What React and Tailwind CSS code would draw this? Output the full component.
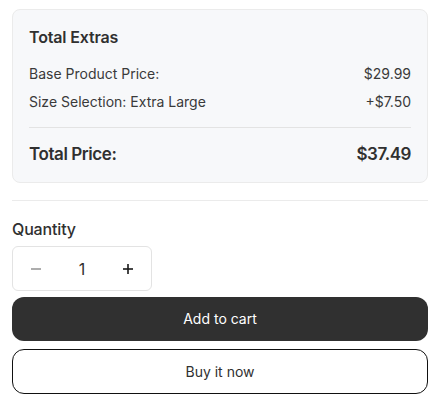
export default function App() {
  return (
    <div className="w-[440px] bg-white px-3 pt-[9px] pb-3 text-[#303030]" style={{ fontFamily: 'Inter, "Noto Sans", sans-serif' }}>
      <div className="rounded-lg border border-[#ebebeb] bg-[#f7f8fa] p-4">
        <h2 className="mb-4 text-base font-semibold leading-[22px] tracking-[-0.01em]">Total Extras</h2>
        <div className="flex flex-col gap-2 text-sm leading-5 text-[#3a3a3a]">
          <div className="flex justify-between">
            <span>Base Product Price:</span>
            <span>$29.99</span>
          </div>
          <div className="flex justify-between">
            <span>Size Selection: Extra Large</span>
            <span>+$7.50</span>
          </div>
        </div>
        <div className="mt-[15px] border-t border-[#e3e3e3] pt-[14px]">
          <div className="flex justify-between text-[17px] font-semibold leading-6 tracking-[-0.025em]">
            <span>Total Price:</span>
            <span>$37.49</span>
          </div>
        </div>
      </div>
      <div className="mt-[17px] border-t border-[#ebebeb] pt-4">
        <div className="text-base font-medium leading-6 tracking-[-0.01em]">Quantity</div>
        <div className="mt-[5px] grid h-[45px] w-[140px] grid-cols-3 items-center rounded-md border border-[#e3e3e3] bg-white">
          <button className="flex items-center justify-center text-[#8a8a8a]">
            <svg width="10" height="2" viewBox="0 0 10 2"><rect width="10" height="1.4" x="0" y="0.3" fill="currentColor" /></svg>
          </button>
          <div className="text-center text-base leading-6">1</div>
          <button className="flex items-center justify-center text-[#1a1a1a]">
            <svg width="10" height="10" viewBox="0 0 10 10"><rect width="10" height="1.6" x="0" y="4.2" fill="currentColor" /><rect width="1.6" height="10" x="4.2" y="0" fill="currentColor" /></svg>
          </button>
        </div>
        <button className="mt-[6px] flex h-11 w-full items-center justify-center rounded-xl bg-[#303030] text-sm text-white">
          Add to cart
        </button>
        <button className="mt-2 flex h-[45px] w-full items-center justify-center rounded-xl border-[1.5px] border-[#111] bg-white text-sm text-[#303030]">
          Buy it now
        </button>
      </div>
    </div>
  );
}
